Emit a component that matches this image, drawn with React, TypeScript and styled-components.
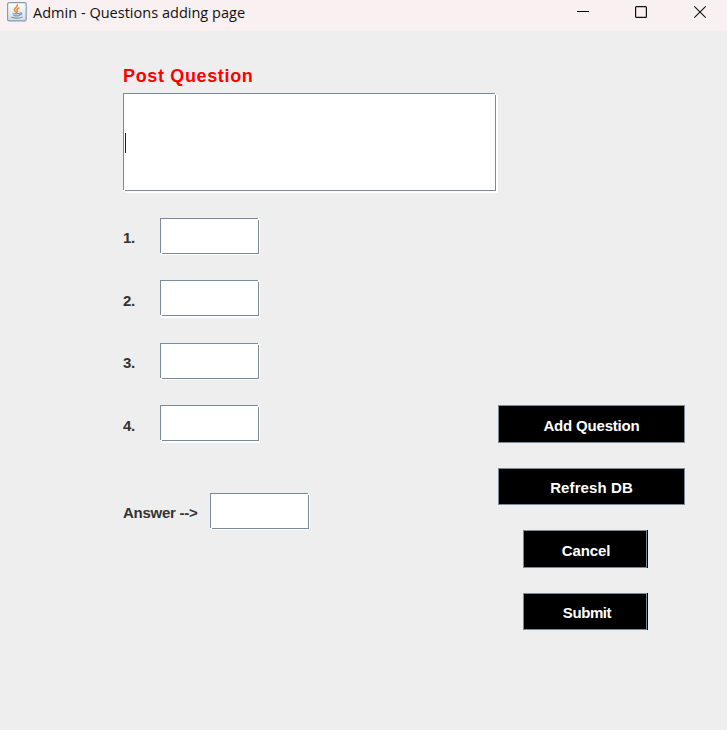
import React from 'react';
import styled, { createGlobalStyle } from 'styled-components';

const GlobalStyle = createGlobalStyle`
  * { box-sizing: border-box; }
  html, body { margin: 0; background: #eeeeee; overflow: hidden; }
`;

const Window = styled.div`
  width: 727px;
  height: 730px;
  background: #eeeeee;
  font-family: "Liberation Sans", Arial, sans-serif;
`;

const TitleBar = styled.header`
  display: flex;
  align-items: flex-start;
  height: 31px;
  background: #f9f0f1;
  padding-left: 7px;
`;

const AppIcon = styled.svg`
  display: block;
  width: 20px;
  height: 20px;
  margin-top: 2px;
  flex: none;
`;

const Title = styled.h1`
  margin: 0 0 0 6px;
  flex: 1;
  font: 400 14.5px/26px "Open Sans", "Noto Sans", sans-serif;
  letter-spacing: 0.02px;
  color: #111;
  white-space: pre;
`;

const Controls = styled.svg`
  display: block;
  width: 150px;
  height: 26px;
  flex: none;
`;

const Content = styled.main`
  display: grid;
  grid-template-columns: 375px 187px;
  padding-left: 123px;
`;

const Form = styled.form`
  display: flex;
  flex-direction: column;
  padding-top: 34px;
`;

const Heading = styled.label`
  height: 28px;
  font-size: 18px;
  font-weight: 700;
  line-height: 22px;
  letter-spacing: 0.65px;
  color: #ff0000;
  white-space: nowrap;
`;

/* Sunken field: each edge stops short of the top-right and bottom-left corners. */
const Box = styled.div<{ $w: number; $h: number; $right?: number; $bottom?: number }>`
  --edge: linear-gradient(#7a8a99, #7a8a99);
  display: flex;
  align-items: center;
  flex: none;
  width: ${p => p.$w}px;
  height: ${p => p.$h}px;
  padding: 1px;
  background:
    var(--edge) 0 0 / calc(100% - 1px) 1px no-repeat,
    var(--edge) 0 0 / 1px calc(100% - 1px) no-repeat,
    var(--edge) 100% 100% / calc(100% - 2px) 1px no-repeat,
    var(--edge) 100% 100% / 1px calc(100% - 2px) no-repeat,
    #fff;
  box-shadow: ${p => p.$right ?? 1}px ${p => p.$bottom ?? 1}px 0 #fff;
`;

const Caret = styled.span`
  width: 1px;
  height: 20px;
  margin: 2px 0 0 1px;
  background: #222;
`;

const Rows = styled.div`
  display: flex;
  flex-direction: column;
  margin-top: 27px;
`;

const Row = styled.div<{ $gap: number; $label: number }>`
  display: grid;
  grid-template-columns: ${p => p.$label}px auto;
  justify-content: start;
  margin-bottom: ${p => p.$gap}px;
`;

const Label = styled.label<{ $track: number; $top?: number }>`
  padding-top: ${p => p.$top ?? 11}px;
  font-size: 15px;
  font-weight: 700;
  line-height: 18px;
  letter-spacing: ${p => p.$track}px;
  color: #333;
  white-space: nowrap;
`;

const Actions = styled.div`
  display: flex;
  flex-direction: column;
  align-items: flex-start;
  padding-top: 374px;
`;

const Button = styled.button<{ $h: number; $gap: number; $narrow?: boolean; $track: number; $shift?: number }>`
  display: flex;
  justify-content: center;
  align-items: flex-start;
  width: ${p => (p.$narrow ? 124 : 187)}px;
  height: ${p => p.$h}px;
  margin: 0 0 ${p => p.$gap}px ${p => (p.$narrow ? 25 : 0)}px;
  padding: ${p => p.$h - 27}px 0 0 ${p => p.$shift ?? 0}px;
  border: 1px solid #7a8a99;
  border-radius: 0;
  background: #000;
  box-shadow: ${p => (p.$narrow ? '1px 0 0 #000' : 'none')};
  color: #fff;
  font: 700 15px/18px "Liberation Sans", Arial, sans-serif;
  letter-spacing: ${p => p.$track}px;
`;

const choices = [
  { text: '1.', gap: 26, bottom: 1, top: 11 },
  { text: '2.', gap: 27, bottom: 2, top: 12 },
  { text: '3.', gap: 26, bottom: 1, top: 11 },
  { text: '4.', gap: 52, bottom: 2, top: 12 },
];

function JavaIcon() {
  return (
    <AppIcon viewBox="0 0 20 20">
      <defs>
        <linearGradient id="tile" x1="0" y1="0" x2="0" y2="1">
          <stop offset="0" stopColor="#ffffff" />
          <stop offset="1" stopColor="#d5dde3" />
        </linearGradient>
      </defs>
      <rect x="0.6" y="0.6" width="18.6" height="18.2" rx="1.6" fill="url(#tile)" stroke="#7f9fb4" strokeWidth="1.2" />
      <path d="M10.300 2.800C11.200 5 7 6 7.300 8c.2 1 1.500 1.400 2 2.300M12 6c-2 .8-2.600 1.800-1.800 2.700.5.600.3 1.100 0 1.500" fill="none" stroke="#ed8b36" strokeWidth="1.500" strokeLinecap="round" />
      <path d="M5.500 10.900h7.600c0 2-.7 3.200-1.900 3.600H7.600c-1.300-.5-2-1.600-2.100-3.600" fill="#86a4b8" />
      <path d="M6 12.300c2 .5 4.500.5 6.800 0" fill="none" stroke="#d7e1e8" strokeWidth=".7" />
      <path d="M13 11c2.300-.7 2.600 1.500-.4 2.200M4.700 15.200c1 1.200 8.800 1.200 10.400-.1" fill="none" stroke="#6f94ad" strokeWidth="1.200" strokeLinecap="round" />
    </AppIcon>
  );
}

export default function App() {
  return (
    <>
      <GlobalStyle />
      <Window>
        <TitleBar>
          <JavaIcon />
          <Title>Admin - Questions adding page</Title>
          <Controls viewBox="577 0 150 26" fill="none" stroke="#111" strokeWidth="1.1">
            <path d="M577 11.500h12" stroke="#000" strokeWidth="1" />
            <rect x="635.600" y="6.600" width="10.800" height="10.800" rx="1" strokeWidth="1.200" />
            <path d="M694.300 6.300l11.400 11.400M705.700 6.300l-11.400 11.400" />
          </Controls>
        </TitleBar>
        <Content>
          <Form>
            <Heading>Post Question</Heading>
            <Box $w={373} $h={98} $right={2} $bottom={2}>
              <Caret />
            </Box>
            <Rows>
              {choices.map(c => (
                <Row key={c.text} $gap={c.gap} $label={37}>
                  <Label $track={-0.3} $top={c.top}>{c.text}</Label>
                  <Box $w={99} $h={36} $bottom={c.bottom} />
                </Row>
              ))}
              <Row $gap={0} $label={87}>
                <Label $track={-0.25}>{'Answer -->'}</Label>
                <Box $w={99} $h={36} />
              </Row>
            </Rows>
          </Form>
          <Actions>
            <Button type="button" $h={38} $gap={25} $track={-0.18}>Add Question</Button>
            <Button type="button" $h={37} $gap={25} $track={0.1}>Refresh DB</Button>
            <Button type="button" $h={38} $gap={25} $narrow $track={-0.1} $shift={2}>Cancel</Button>
            <Button type="button" $h={37} $gap={0} $narrow $track={-0.4} $shift={4}>Submit</Button>
          </Actions>
        </Content>
      </Window>
    </>
  );
}
